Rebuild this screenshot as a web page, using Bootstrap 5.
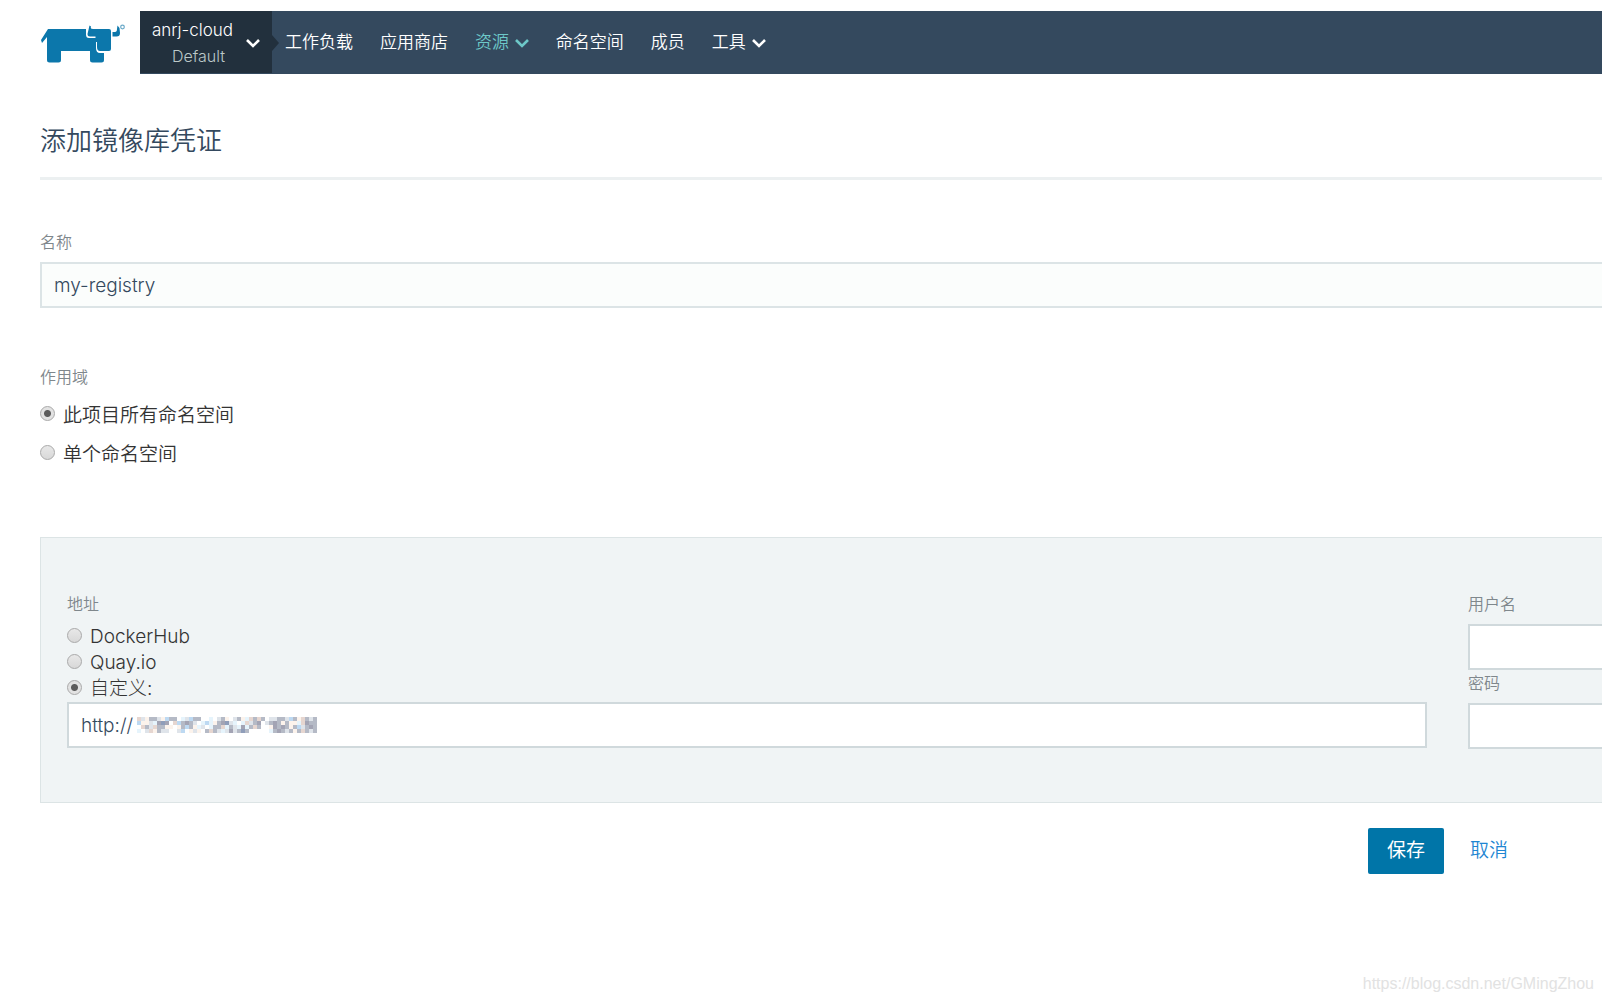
<!DOCTYPE html>
<html lang="zh-CN">
<head>
<meta charset="utf-8">
<meta name="viewport" content="width=device-width, initial-scale=1">
<title>添加镜像库凭证</title>
<link href="https://cdn.jsdelivr.net/npm/bootstrap@5.3.0/dist/css/bootstrap.min.css" rel="stylesheet">
<style>
body{font-family:Inter,"Noto Sans CJK SC",sans-serif;font-weight:350;font-size:19px;line-height:26px;color:#333;background:#fff}
.site-head{padding:11px 0 0 40px}
.brand-logo{width:100px}
.main-bar{height:63px;background:#34495e}
.project-btn{width:132px;height:62px;background:#22303d;color:#fff;border:0;font-size:17px;line-height:26px;padding:1px 12px 0 12px;font-weight:300;position:relative}
.project-btn::after{content:"";position:absolute;left:100%;top:24px;border:8px solid transparent;border-left:7px solid #22303d;border-right:0}
.project-btn .project-name{color:#bcc8c9;font-size:16px;padding-left:12px}
.nav-items{gap:1px}
.main-bar .nav-link{font-size:17px;line-height:26px;color:#fff;padding:0 13px 2px;white-space:nowrap}
.main-bar .nav-link.active{color:#6dc8c8}
.nav-link svg{margin-left:1px}
.page-body{padding-left:40px}
.page-title{font-size:26px;line-height:40px;font-weight:350;color:#34495e;margin:47px 0 0;padding-bottom:16px;border-bottom:3px solid #ecf0f1}
.field-label{display:block;font-size:16px;line-height:24px;color:#7f878c;margin:0 0 8px}
.form-control.field{height:46px;border:2px solid #d0d9dc;border-radius:0;font-size:19px;font-weight:300;color:#34495e;padding:0 12px;background:#fff}
.form-control.field.tinted{background:#fbfdfc;border-color:#dce4e6}
.form-control.bleed,.panel-box{border-right:0!important}
.name-group{margin-top:50px}
.scope-group{margin-top:57px}
.scope-title{margin-bottom:7px}
.opt{display:flex;align-items:center;gap:8px;height:26px}
.opt input{appearance:none;width:15px;height:15px;margin:0 0 4px;border:1px solid #a9a9a9;border-radius:50%;background:linear-gradient(#e8e8e8,#d8d8d8);flex:none}
.opt input:checked{background:radial-gradient(circle,#5c5c5c 0 3px,#e2e2e2 4px)}
.scope-group .opt{height:39px}
.panel-box{background:#f0f4f5;border:1px solid #dce4e5;margin-top:63px;padding:54px 0 52px 26px}
.addr-col{flex:1;min-width:0;margin-right:41px}
.cred-col{width:134px;flex:none}
.cred-col .field{margin-bottom:1px}
.addr-col .opt{font-weight:300}
.mosaic{position:absolute;left:70px;top:15px}
.actions{padding:25px 94px 0 0;gap:26px}
.btn-save{background:#0075a8;color:#fff;border-radius:2px;border:0;width:76px;height:46px;font-size:19px;font-weight:400;padding:0}
.btn-cancel{color:#1e86d2;text-decoration:none}
.source-note{font-family:"Liberation Sans",sans-serif;font-weight:400;font-size:16px;line-height:24px;color:#e2e2e2;padding:98px 8px 0 0}
</style>
</head>
<body>
<header class="site-head d-flex">
<a class="brand-logo flex-shrink-0" href="#" aria-label="Rancher"><svg class="d-block" width="88" height="56" viewBox="40 11 88 56" fill="#0c77ab"><path d="M48 29H86V34.500Q86 38 89 38H96V48Q96 53 100 53H104V60Q104 62.500 101.500 62.500H92.500Q90 62.500 90 60V51H61V60Q61 62.500 58.500 62.500H49.500Q47 62.500 47 60V37L42 43L41 40Z"/><path d="M89.500 25.500L91 26.500Q90 29 93 29H109Q111 29 111 31V49Q111 51 109 51H100Q97 51 97 47V42H95.500V36.500H90Q87.500 36.500 87.500 34Z"/><path d="M117.500 25.500L119.500 28L120 33Q120 36.500 116.500 36.500H112.500V32H115Q117 32 117 29Z"/><circle cx="122.500" cy="27" r="1.800" fill="none" stroke="#6aa9c8" stroke-width="1.200"/></svg></a>
<nav class="main-bar d-flex align-items-start flex-grow-1">
<button class="project-btn d-flex align-items-center justify-content-between" type="button"><span>anrj-cloud<span class="project-name d-block text-center">Default</span></span><svg width="14" height="10" viewBox="0 0 14 10" fill="none" stroke="#fff" stroke-width="2.600"><path d="M1 2L7 8L13 2"/></svg></button>
<div class="nav-items d-flex align-items-center h-100">
<a class="nav-link" href="#">工作负载</a><a class="nav-link" href="#">应用商店</a><a class="nav-link active" href="#">资源 <svg width="14" height="10" viewBox="0 0 14 10" fill="none" stroke="currentColor" stroke-width="2.600"><path d="M1 2L7 8L13 2"/></svg></a><a class="nav-link" href="#">命名空间</a><a class="nav-link" href="#">成员</a><a class="nav-link" href="#">工具 <svg width="14" height="10" viewBox="0 0 14 10" fill="none" stroke="currentColor" stroke-width="2.600"><path d="M1 2L7 8L13 2"/></svg></a>
</div>
</nav>
</header>
<main class="page-body">
<h1 class="page-title">添加镜像库凭证</h1>
<form>
<div class="name-group"><label class="field-label" for="regName">名称</label><input id="regName" class="form-control field tinted bleed" value="my-registry"></div>
<div class="scope-group" role="radiogroup" aria-labelledby="scopeLabel">
<span class="field-label scope-title" id="scopeLabel">作用域</span>
<label class="opt"><input type="radio" name="scope" checked>此项目所有命名空间</label>
<label class="opt"><input type="radio" name="scope">单个命名空间</label>
</div>
<section class="panel-box d-flex">
<div class="addr-col">
<label class="field-label" for="addr">地址</label>
<label class="opt"><input type="radio" name="host">DockerHub</label>
<label class="opt"><input type="radio" name="host">Quay.io</label>
<label class="opt"><input type="radio" name="host" checked>自定义:</label>
<div class="position-relative"><input id="addr" class="form-control field" value="http://"><svg class="mosaic" id="mosaic" width="184" height="16" shape-rendering="crispEdges" aria-hidden="true"></svg></div>
</div>
<div class="cred-col">
<label class="field-label" for="user">用户名</label><input id="user" class="form-control field bleed">
<label class="field-label" for="pass">密码</label><input id="pass" type="password" class="form-control field bleed">
</div>
</section>
<div class="actions d-flex justify-content-end align-items-center"><button type="button" class="btn btn-save">保存</button><a class="btn-cancel" href="#">取消</a></div>
</form>
</main>
<footer class="source-note text-end">https://blog.csdn.net/GMingZhou</footer>
<script src="https://cdn.jsdelivr.net/npm/bootstrap@5.3.0/dist/js/bootstrap.bundle.min.js"></script>
<script>
// Pixelated mask over the private part of the registry address
const rows=[
"cbdaabdeaa.gbeaa..g.bad.badgcaca.bbaabeadcaba",
"eddbgfhf.ceafab.gegdafhbg.gcbaf.bafadaddgcfaa",
".cabcaadd.daeadgb.gaacgabgfgaca..dfafadaebafa",
"g.bcdabb..be.dbd.acabgbfbaha.....gafabadacaba"];
const colors={a:"#b5bac6",b:"#dfe4ea",c:"#e6d6d0",d:"#fcf3ec",e:"#bdd9f2",f:"#a3a4b4",g:"#e6f4fc",h:"#8f9db9"};
rows.forEach((row,y)=>[...row].forEach((key,x)=>{
  if(!colors[key])return;
  const r=document.createElementNS("http://www.w3.org/2000/svg","rect");
  r.setAttribute("x",x*4);r.setAttribute("y",y*4);r.setAttribute("width",4);r.setAttribute("height",4);r.setAttribute("fill",colors[key]);
  document.getElementById("mosaic").append(r);
}));
</script>
</body>
</html>
